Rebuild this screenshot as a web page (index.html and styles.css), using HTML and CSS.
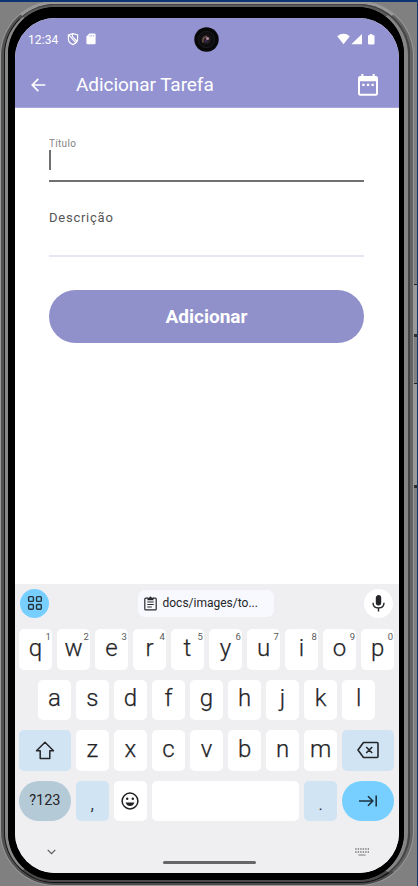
FILE: index.html
```html
<!DOCTYPE html>
<html lang="pt-BR">
<head>
<meta charset="utf-8">
<title>Adicionar Tarefa</title>
<link rel="stylesheet" href="styles.css">
</head>
<body>
<div class="side-button power"></div>
<div class="side-button volume"></div>
<div class="ring outer"><div class="ring groove"><div class="ring metal"><div class="ring bezel">
<main class="screen">
  <header class="top">
    <div class="status">
      <span class="clock">12:34</span>
      <svg class="shield" width="12" height="14" viewBox="0 0 12 14" fill="none" stroke="#fff" stroke-width="1.2"><path d="M6 1.6 10.6 3V6.8C10.6 9.5 8.5 11.7 6 12.6 3.5 11.7 1.4 9.5 1.4 6.8V3ZM2 3.2 9 10.8M5.4 2.6V4.6L9.8 9"/></svg>
      <svg class="sd" width="10" height="12" viewBox="0 0 10 12"><path fill="#fff" d="M3.4.5H8.4Q9.6.5 9.6 1.7V10Q9.6 11.2 8.4 11.2H1.6Q.4 11.2.4 10V3.5Z"/><path d="M4 2v1.5M5.8 2v1.5M7.6 2v1.5" stroke="#9393d2" stroke-width=".7"/></svg>
      <svg class="signals" width="39" height="13" viewBox="0 0 39 13" fill="#fff"><path d="M.2 3.3Q6.5-1.6 12.8 3.3L6.5 11.2ZM25 1V11.3H14.3ZM31 2.2H32.7V1H35.3V2.2H37.5V10.3Q37.5 11.5 36.3 11.5H32.2Q31 11.5 31 10.3Z"/></svg>
    </div>
    <div class="camera"><svg width="25" height="25" viewBox="0 0 25 25"><circle cx="12.5" cy="12.5" r="12.2" fill="#080809"/><circle cx="12.5" cy="12.5" r="8.2" fill="#0e0e10" stroke="#202022" stroke-width=".8"/><circle cx="12" cy="12.5" r="4.6" fill="#251d22"/><path d="M9 15.5Q8 10 13 9.5" fill="none" stroke="#72564b" stroke-width="1.4"/><circle cx="13.5" cy="11.5" r="1.5" fill="#b487a1"/><circle cx="12.2" cy="14" r="1.3" fill="#392b54"/></svg></div>
    <div class="appbar">
      <svg class="back" width="15" height="14" viewBox="0 0 15 14" fill="none" stroke="#fff" stroke-width="1.7"><path d="M14.3 7H1.6M7.3.9 1.3 7 7.3 13.1"/></svg>
      <h1>Adicionar Tarefa</h1>
      <svg class="calendar" width="20" height="22" viewBox="0 0 20 22"><path fill="#fff" fill-rule="evenodd" d="M3.3 0H5.4V2H14.6V0H16.7V2H17.8Q20 2 20 4.2V19.6Q20 21.8 17.8 21.8H2.2Q0 21.8 0 19.6V4.2Q0 2 2.2 2H3.3ZM2 7.2V19.7H18V7.2Z"/><path fill="#fff" d="M4.3 9.7h2.3v2.2H4.3zm4.6 0h2.3v2.2H8.9zm4.6 0h2.3v2.2h-2.3z"/></svg>
    </div>
  </header>
  <form class="task">
    <label class="field focused"><span>Título</span><i class="caret"></i></label>
    <label class="field description"><span>Descrição</span></label>
    <button type="button" class="submit">Adicionar</button>
  </form>
  <section class="keyboard">
    <div class="toolbar">
      <div class="round apps"><svg width="16" height="16" viewBox="0 0 16 16" fill="none" stroke="#263238" stroke-width="1.4"><rect x="1.6" y="1.6" width="4.8" height="4.8" rx="1"/><rect x="9.5" y="1.6" width="4.8" height="4.8" rx="1"/><rect x="1.6" y="9.5" width="4.8" height="4.8" rx="1"/><rect x="9.5" y="9.5" width="4.8" height="4.8" rx="1"/></svg></div>
      <div class="clip"><svg width="13" height="15" viewBox="0 0 13 15" fill="none" stroke="#292a2d" stroke-width="1.2"><path d="M4 2.2H1.7Q.8 2.2.8 3.1V13Q.8 13.9 1.7 13.9H11.3Q12.2 13.9 12.2 13V3.1Q12.2 2.2 11.3 2.2H9M3.3 6H9.7M3.3 8.5H9.7M3.3 11H7.8"/><path d="M3.5 1.8H5.2Q6.5-.8 7.8 1.8H9.5V4.2H3.5Z" fill="#292a2d" stroke="none"/></svg><span>docs/images/to...</span></div>
      <div class="round mic"><svg width="13" height="17" viewBox="0 0 13 17" fill="none" stroke="#242528" stroke-width="1.4"><rect x="4.5" y=".8" width="4" height="9" rx="2" fill="#242528"/><path d="M1 7.8Q1 13 6.5 13T12 7.8M6.5 13V16.5"/></svg></div>
    </div>
    <div class="row numbers">
      <div class="key">q<sup>1</sup></div><div class="key">w<sup>2</sup></div><div class="key">e<sup>3</sup></div><div class="key">r<sup>4</sup></div><div class="key">t<sup>5</sup></div><div class="key">y<sup>6</sup></div><div class="key">u<sup>7</sup></div><div class="key">i<sup>8</sup></div><div class="key">o<sup>9</sup></div><div class="key">p<sup>0</sup></div>
    </div>
    <div class="row home">
      <div class="key">a</div><div class="key">s</div><div class="key">d</div><div class="key">f</div><div class="key">g</div><div class="key">h</div><div class="key">j</div><div class="key">k</div><div class="key">l</div>
    </div>
    <div class="row lower">
      <div class="key tint icon"><svg width="20" height="19" viewBox="0 0 20 19" fill="none" stroke="#242629" stroke-width="1.5" stroke-linejoin="round"><path d="M10 1.2 18.5 9.8H14.8V17.5H5.2V9.8H1.5Z"/></svg></div>
      <div class="key">z</div><div class="key">x</div><div class="key">c</div><div class="key">v</div><div class="key">b</div><div class="key">n</div><div class="key">m</div>
      <div class="key tint icon"><svg width="22" height="18" viewBox="0 0 22 18" fill="none" stroke="#242629" stroke-width="1.6" stroke-linejoin="round"><path d="M6.5 1.5H20Q21 1.5 21 2.5V15.5Q21 16.5 20 16.5H6.5L1 9ZM9.2 6 15.2 12M15.2 6 9.2 12"/></svg></div>
    </div>
    <div class="row bottom">
      <div class="key symbols">?123</div>
      <div class="key tint punct">,</div>
      <div class="key icon"><svg width="18" height="18" viewBox="0 0 18 18"><circle cx="9" cy="9" r="7.9" fill="none" stroke="#202124" stroke-width="1.5"/><circle cx="6.2" cy="6.8" r="1.2" fill="#202124"/><circle cx="11.8" cy="6.8" r="1.2" fill="#202124"/><path d="M4.6 10.5H13.4Q12.2 14.1 9 14.1T4.6 10.5Z" fill="#202124"/></svg></div>
      <div class="key"></div>
      <div class="key tint punct">.</div>
      <div class="key enter icon"><svg width="20" height="12" viewBox="0 0 20 12" fill="none" stroke="#1d333f" stroke-width="1.6"><path d="M1 6H14.5M10 1.3 14.8 6 10 10.7M18.2.6V11.4"/></svg></div>
    </div>
    <div class="nav">
      <svg width="9" height="6" viewBox="0 0 9 6" fill="none" stroke="#555" stroke-width="1.1"><path d="M.7.8 4.5 4.6 8.3.8"/></svg>
      <div class="handle"></div>
      <svg width="14" height="8" viewBox="0 0 14 8" fill="none" stroke="#777" stroke-width="1.4"><path d="M.2 1H14M.2 4H14" stroke-dasharray="1.4 1.1"/><path d="M3.5 7H10.5" stroke-width="1.2"/></svg>
    </div>
  </section>
</main>
</div></div></div></div>
</body>
</html>
```

FILE: styles.css
```css
* { box-sizing: border-box; }
body {
  position: relative;
  width: 418px;
  height: 886px;
  margin: 0;
  padding: 0 4px 1px 1px;
  overflow: hidden;
  background: #808080;
  border-top: 2px solid #0c3474;
  border-right: 1px solid #12386b;
  font-family: Roboto, "Liberation Sans", sans-serif;
  color: #242528;
}
svg { display: block; flex: none; }
.ring { height: 100%; border-style: solid; }
.outer {
  border-width: 2px 3px 2px 3px;
  border-color: #989898 #636363 #4b4b4b #505152;
  border-radius: 54px;
  background: #333;
  box-shadow: 0 0 0 1px #999;
}
.groove {
  border-width: 1px 2px 1px 1px;
  border-color: #454545 #444 #111 #151515;
  border-radius: 51px;
  background: #444;
}
.metal {
  border-width: 2px 4px 2px 3px;
  border-color: #5b5b5b #858585 #4a4a4a #888;
  border-radius: 50px;
  background: #000;
}
.bezel {
  border-width: 11px 5px 6px 7px;
  border-color: #000;
  border-radius: 47px;
  background: #000;
}
.side-button {
  position: absolute;
  right: 0;
  width: 3px;
  background: #9a9a9a;
  border-top: 1px solid #222;
  border-bottom: 3px solid #303030;
}
.power { top: 282px; height: 53px; }
.volume { top: 381px; height: 105px; }
.screen {
  display: flex;
  flex-direction: column;
  width: 384px;
  height: 855px;
  overflow: hidden;
  border-radius: 40px;
  background: #fff;
}
.top { position: relative; height: 90px; background: #9393d2; color: #fff; border-bottom: 1px solid #a6a6da; }
.status { display: flex; align-items: center; height: 42px; padding: 0 23px 0 13px; }
.clock { width: 39px; padding-top: 1px; font-size: 12px; letter-spacing: .1px; }
.sd { margin-left: 7px; }
.signals { margin-left: auto; }
.camera { position: absolute; top: 9px; left: 179px; }
.appbar { display: flex; align-items: center; height: 49px; padding: 0 21px 0 16px; }
h1 { margin: 0 auto 0 30px; font-size: 19px; line-height: 24px; font-weight: 400; letter-spacing: -.06px; }
.task { display: flex; flex-direction: column; height: 476px; padding: 28px 35px 0 34px; }
.field { display: block; height: 46px; border-bottom: 2px solid #707070; }
.field span { display: block; padding-top: 1px; font-size: 10px; line-height: 14px; letter-spacing: .3px; color: #858585; }
.caret { display: block; width: 2px; height: 20px; margin-top: -1px; background: #707070; }
.field.description { height: 47px; margin-top: 28px; border-bottom-color: #e7e6f5; }
.field.description span { padding: 0; font-size: 13px; line-height: 15px; letter-spacing: .75px; color: #555; }
.submit { height: 53px; margin-top: 33px; padding: 0; border: 0; border-radius: 27px; background: #9090cb; color: #fff; font: 700 19px Roboto, sans-serif; }
.keyboard { height: 289px; padding: 0 5px 0 4px; background: #efeff2; }
.toolbar { display: flex; align-items: center; justify-content: space-between; height: 45px; padding: 0 1px 7px; }
.round { display: grid; place-items: center; width: 29px; height: 29px; border-radius: 50%; }
.apps { background: #77cfff; }
.mic { background: #fff; }
.clip { display: flex; align-items: center; gap: 6px; width: 136px; height: 27px; padding-left: 6px; border-radius: 7px; background: #f8f9fe; font-size: 12px; margin-right: 2px; }
.row { display: grid; gap: 5.2px; height: 40.5px; margin-bottom: 10px; }
.numbers { grid-template-columns: repeat(10, 1fr); }
.home { grid-template-columns: repeat(9, 1fr); padding: 0 19px; }
.lower { grid-template-columns: 51.7px repeat(7, 1fr) 51.7px; }
.bottom { grid-template-columns: 51.7px 32.8px 32.8px 1fr 32.8px 51.7px; }
.key { position: relative; display: flex; align-items: center; justify-content: center; min-width: 0; padding-bottom: 3px; border-radius: 5px; background: #fff; font-size: 24px; font-weight: 300; line-height: 1; -webkit-text-stroke: .25px currentColor; }
.key sup { position: absolute; top: 3px; right: 1px; font-size: 9.5px; font-weight: 400; line-height: 10px; color: #5a5a5d; -webkit-text-stroke: 0; }
.tint { background: #d1e4f4; }
.icon { padding-bottom: 0; }
.symbols { padding: 1px 0 0; border-radius: 21px; background: #b4cad7; font-size: 14.5px; font-weight: 400; -webkit-text-stroke: 0; }
.punct { padding: 6px 0 0; font-size: 18px; }
.enter { border-radius: 21px; background: #77cfff; }
.nav { display: flex; align-items: center; justify-content: space-between; height: 40px; padding: 2px 25px 0 28px; }
.handle { width: 93px; height: 3px; margin: 20px 0 0 8px; border-radius: 2px; background: #666; }
```
